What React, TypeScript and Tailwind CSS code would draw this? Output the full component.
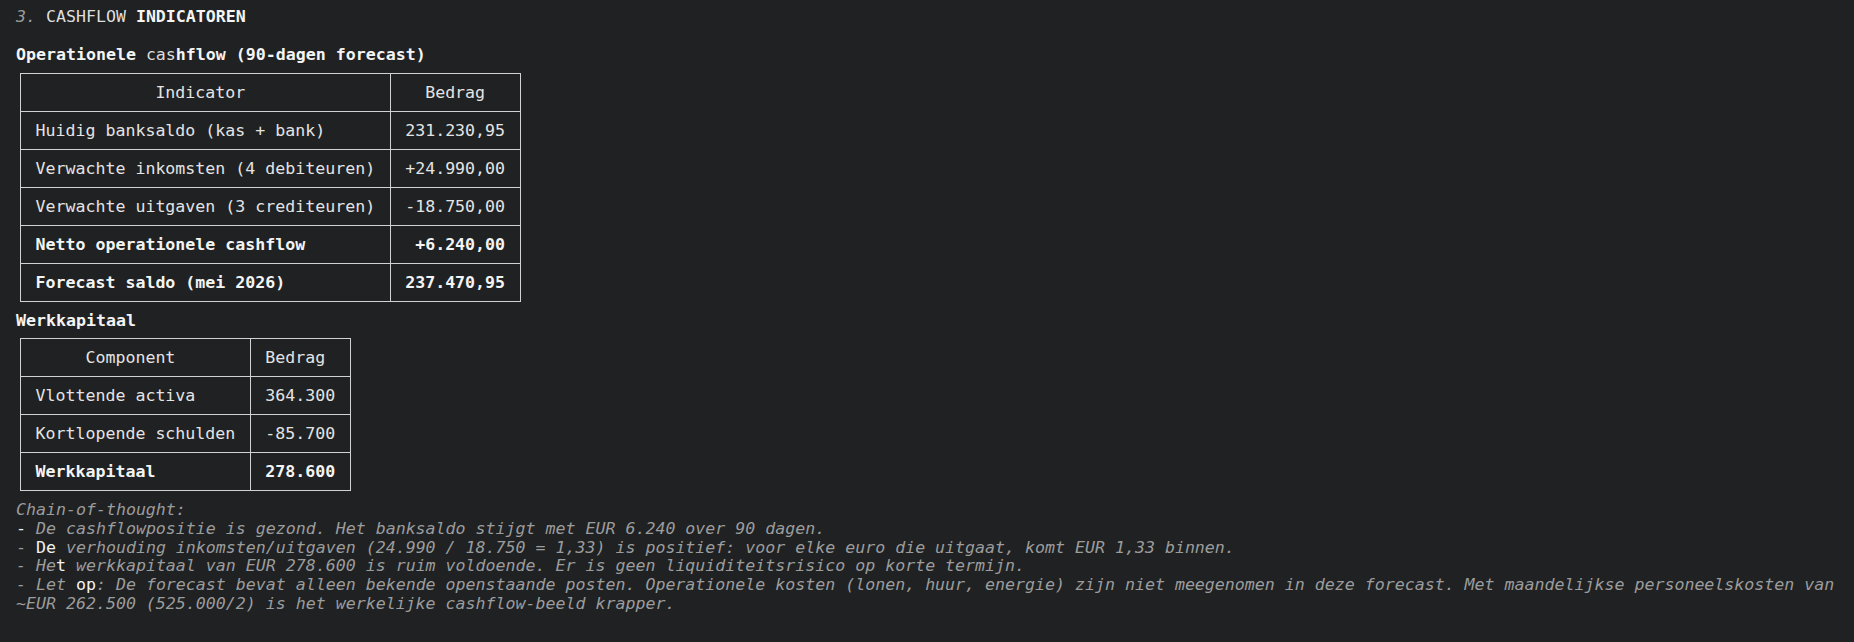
import React from 'react';

const mono = "font-['DejaVu_Sans_Mono','Liberation_Mono',monospace]";

// pad a header to the column's width in characters, like a terminal table does
const centerPad = (text: string, width: number) => {
  const left = Math.floor((width - text.length) / 2);
  return ' '.repeat(left) + text;
};

type Row = { label: string; value: string; bold?: boolean };

const Table: React.FC<{ head: [string, string]; widths: [number, number]; rows: Row[] }> = ({ head, widths, rows }) => (
  <table className="ml-[4px] border-collapse border border-[#d2d2d2]">
    <thead>
      <tr>
        <th className="border border-[#d2d2d2] px-[14.5px] py-[9px] text-left font-normal whitespace-pre text-[#e4e4e4]">
          {centerPad(head[0], widths[0])}
        </th>
        <th className="border border-[#d2d2d2] px-[14.5px] py-[9px] text-left font-normal whitespace-pre text-[#e4e4e4]">
          {centerPad(head[1], widths[1])}
        </th>
      </tr>
    </thead>
    <tbody>
      {rows.map((r) => (
        <tr key={r.label}>
          <td
            className={`border border-[#d2d2d2] px-[14.5px] py-[9px] whitespace-pre ${
              r.bold ? 'font-bold text-[#f4f4f4]' : 'text-[#e4e4e4]'
            }`}
          >
            {r.label}
          </td>
          <td
            className={`border border-[#d2d2d2] px-[14.5px] py-[9px] text-right whitespace-pre ${
              r.bold ? 'font-bold text-[#f4f4f4]' : 'text-[#e4e4e4]'
            }`}
          >
            {r.value}
          </td>
        </tr>
      ))}
    </tbody>
  </table>
);

const cashflow: Row[] = [
  { label: 'Huidig banksaldo (kas + bank)', value: '231.230,95' },
  { label: 'Verwachte inkomsten (4 debiteuren)', value: '+24.990,00' },
  { label: 'Verwachte uitgaven (3 crediteuren)', value: '-18.750,00' },
  { label: 'Netto operationele cashflow', value: '+6.240,00', bold: true },
  { label: 'Forecast saldo (mei 2026)', value: '237.470,95', bold: true },
];

const kapitaal: Row[] = [
  { label: 'Vlottende activa', value: '364.300' },
  { label: 'Kortlopende schulden', value: '-85.700' },
  { label: 'Werkkapitaal', value: '278.600', bold: true },
];

export default function App() {
  return (
    <div className={`${mono} min-h-[642px] w-full bg-[#1f2123] pl-[16px] pr-[16px] pt-[7px] text-[16.6px] leading-[19px] text-[#e4e4e4]`}>
      <div className="whitespace-pre">
        <span className="italic text-[#9c9c9c]">3.</span>
        <span className="text-[#dedede]"> CASHFLOW </span>
        <span className="font-bold text-[#f4f4f4]">INDICATOREN</span>
      </div>

      <div className="mt-[19px] whitespace-pre">
        <span className="font-bold text-[#f4f4f4]">Operationele </span>
        <span className="text-[#dedede]">cas</span>
        <span className="font-bold text-[#f4f4f4]">hflow (90-dagen forecast)</span>
      </div>

      <div className="mt-[8.5px]">
        <Table head={['Indicator', 'Bedrag']} widths={[34, 10]} rows={cashflow} />
      </div>

      <div className="mt-[9.5px] font-bold text-[#f4f4f4]">Werkkapitaal</div>

      <div className="mt-[8px]">
        <Table head={['Component', 'Bedrag']} widths={[20, 7]} rows={kapitaal} />
      </div>

      <div className="mt-[10px] leading-[18.8px] text-[#9c9c9c] whitespace-pre">
        <div className="italic">Chain-of-thought:</div>
        <div>
          <span className="text-[#eeeeee]">-</span>
          <span className="italic"> De cashflowpositie is gezond. Het banksaldo stijgt met EUR 6.240 over 90 dagen.</span>
        </div>
        <div>
          <span>- </span>
          <span className="text-[#f2f2f2]">De</span>
          <span className="italic">
            {' '}verhouding inkomsten/uitgaven (24.990 / 18.750 = 1,33) is positief: voor elke euro die uitgaat, komt EUR 1,33 binnen.
          </span>
        </div>
        <div>
          <span className="italic">- He</span>
          <span className="text-[#f2f2f2]">t</span>
          <span className="italic"> werkkapitaal van EUR 278.600 is ruim voldoende. Er is geen liquiditeitsrisico op korte termijn.</span>
        </div>
        <div>
          <span className="italic">- Let </span>
          <span className="text-[#f2f2f2]">op</span>
          <span className="italic">
            : De forecast bevat alleen bekende openstaande posten. Operationele kosten (lonen, huur, energie) zijn niet meegenomen in deze forecast. Met maandelijkse personeelskosten van
          </span>
        </div>
        <div className="italic">~EUR 262.500 (525.000/2) is het werkelijke cashflow-beeld krapper.</div>
      </div>
    </div>
  );
}
